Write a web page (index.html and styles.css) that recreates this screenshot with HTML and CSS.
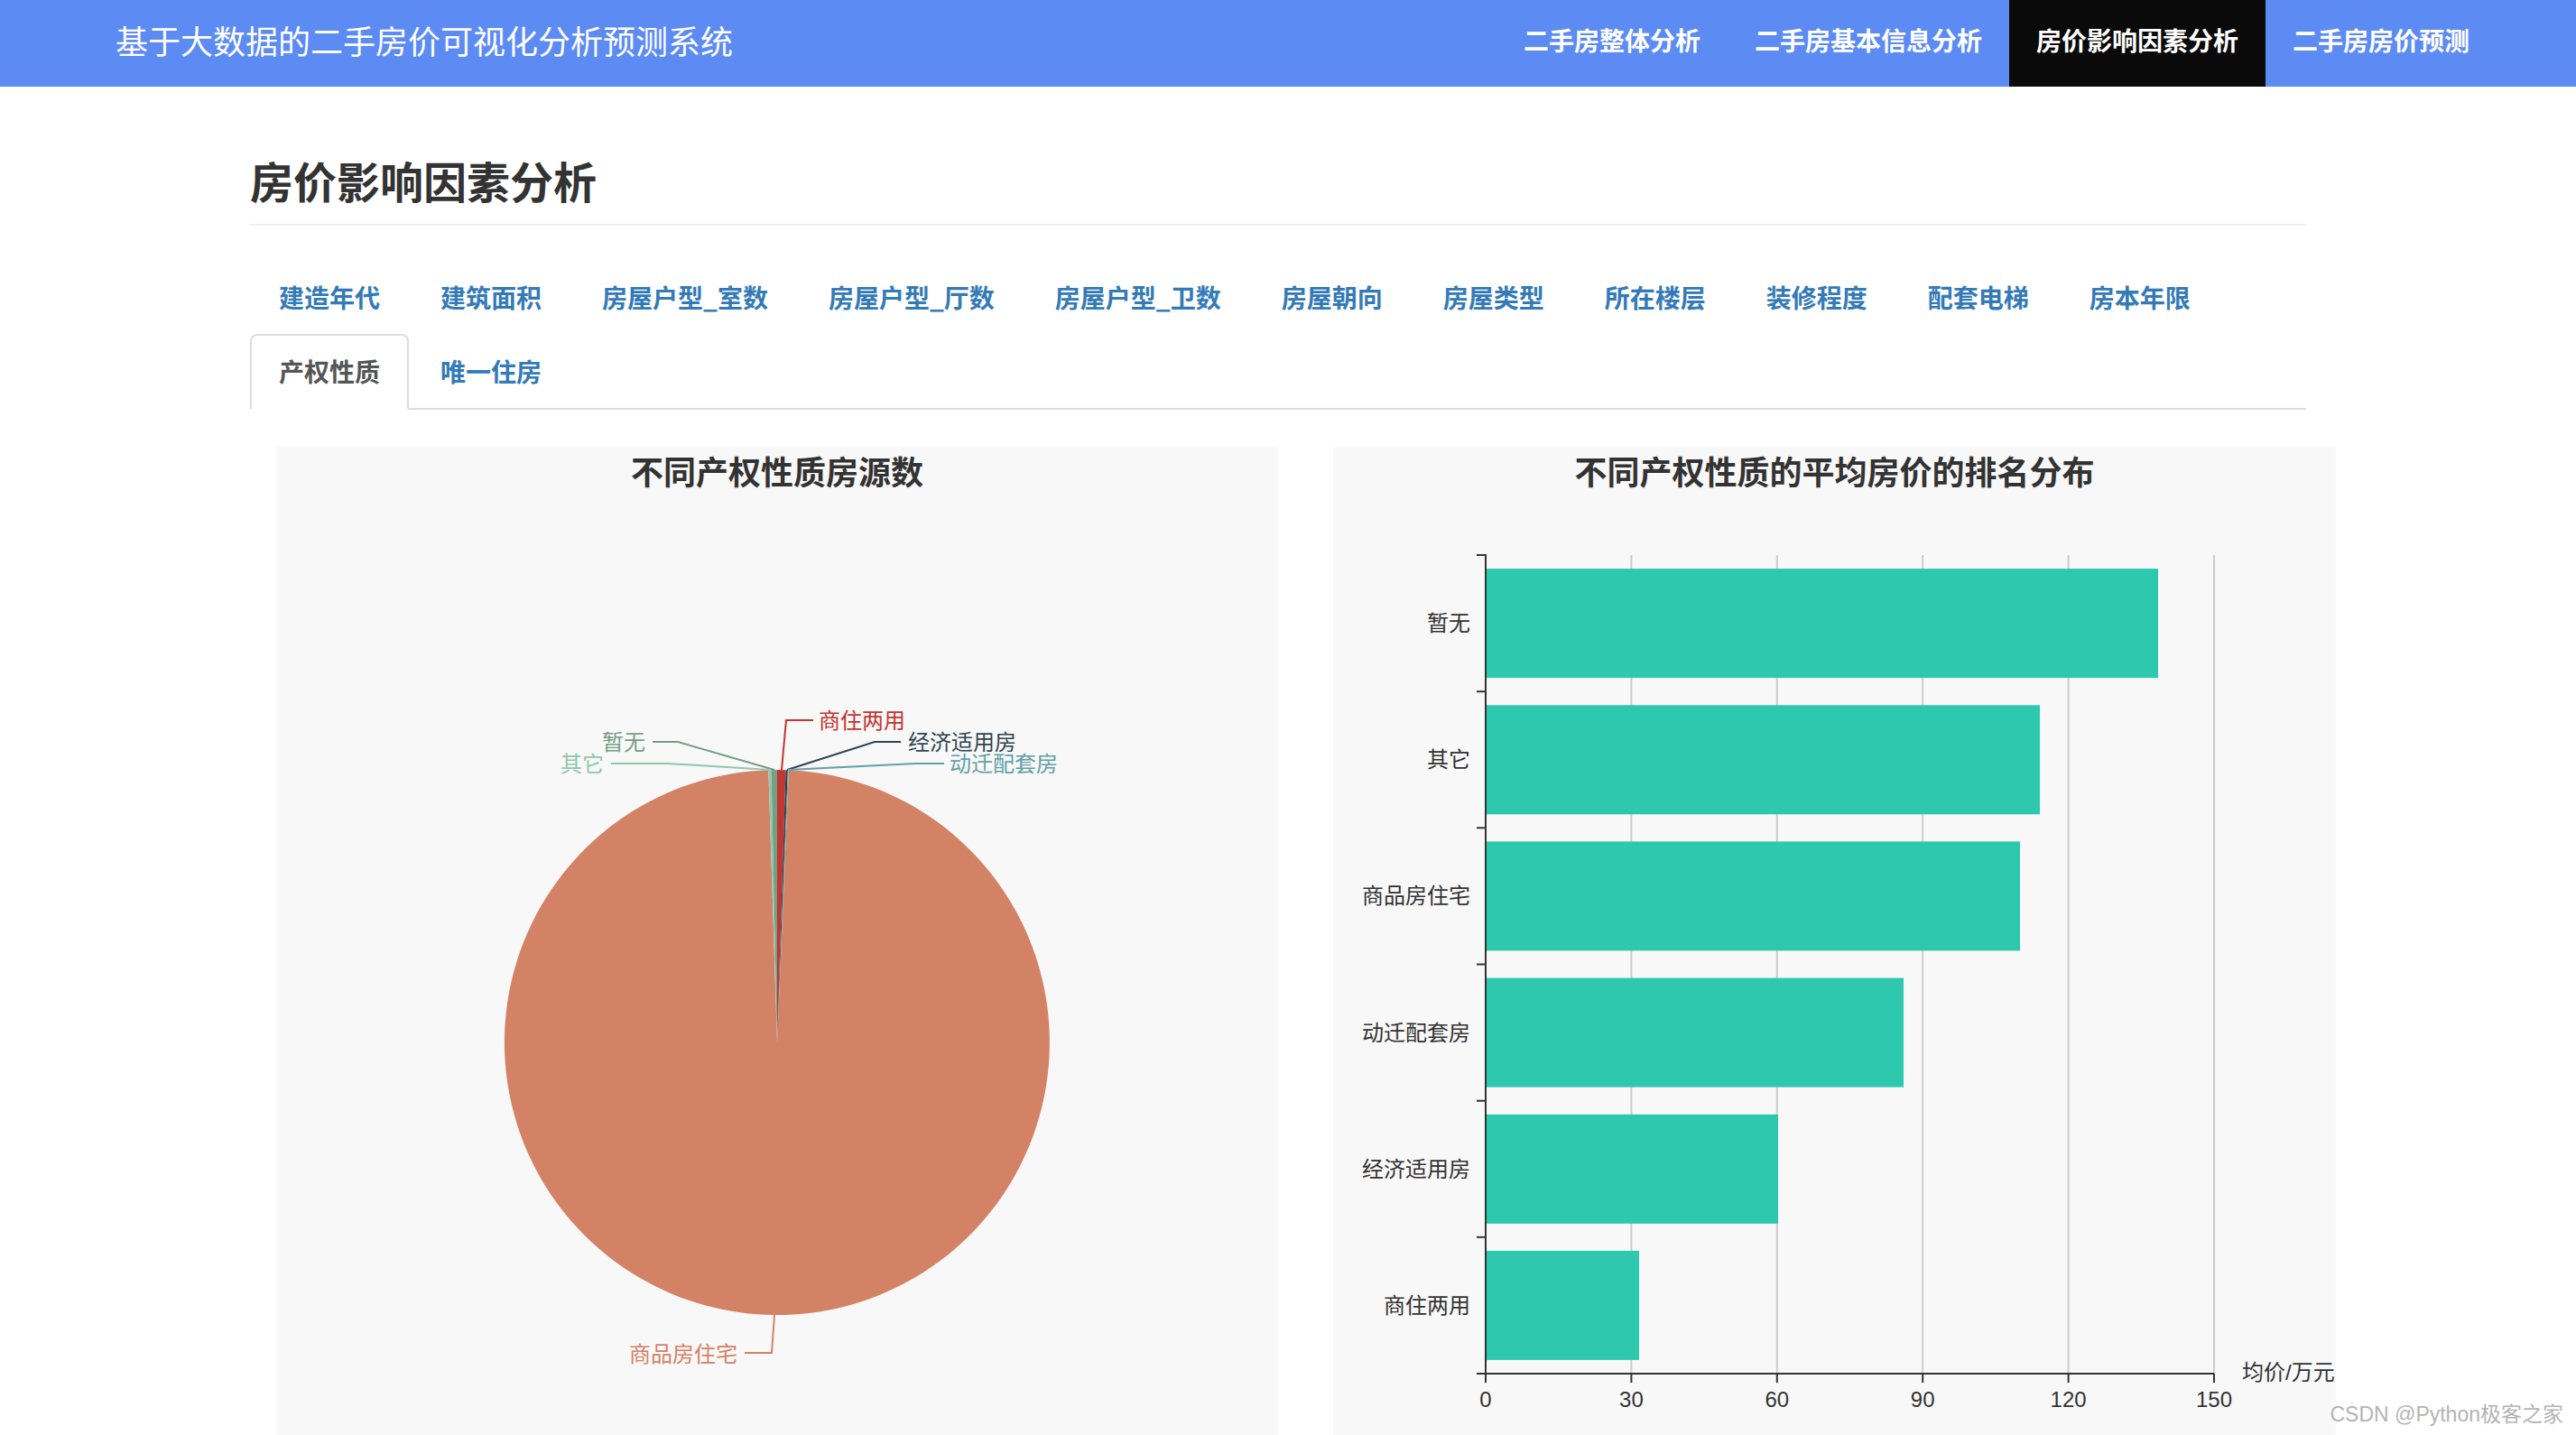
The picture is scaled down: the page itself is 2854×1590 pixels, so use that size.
FILE: index.html
```html
<!DOCTYPE html>
<html lang="zh-CN">
<head>
<meta charset="utf-8">
<title>房价影响因素分析</title>
<link rel="stylesheet" href="styles.css">
</head>
<body>
<header class="navbar">
  <div class="brand">基于大数据的二手房价可视化分析预测系统</div>
  <nav class="nav">
    <a href="#">二手房整体分析</a>
    <a href="#">二手房基本信息分析</a>
    <a href="#" class="active">房价影响因素分析</a>
    <a href="#">二手房房价预测</a>
  </nav>
</header>

<main class="container">
  <div class="page-header"><h3>房价影响因素分析</h3></div>

  <ul class="tabs">
    <li><a href="#">建造年代</a></li>
    <li><a href="#">建筑面积</a></li>
    <li><a href="#">房屋户型_室数</a></li>
    <li><a href="#">房屋户型_厅数</a></li>
    <li><a href="#">房屋户型_卫数</a></li>
    <li><a href="#">房屋朝向</a></li>
    <li><a href="#">房屋类型</a></li>
    <li><a href="#">所在楼层</a></li>
    <li><a href="#">装修程度</a></li>
    <li><a href="#">配套电梯</a></li>
    <li><a href="#">房本年限</a></li>
    <li class="active"><a href="#">产权性质</a></li>
    <li><a href="#">唯一住房</a></li>
  </ul>

  <div class="charts">
    <section class="panel panel-left">
      <svg class="chart" width="1110" height="1095" viewBox="0 0 1110 1095">
        <text class="ctitle" x="555" y="29">不同产权性质房源数</text>
        <g class="slices">
          <path fill="#c23531" d="M555,660 L555,358 A302,302 0 0 1 564.49,358.15 Z"/>
          <path fill="#2f4554" d="M555,660 L564.49,358.15 A302,302 0 0 1 566.86,358.23 Z"/>
          <path fill="#61a0a8" d="M555,660 L566.86,358.23 A302,302 0 0 1 567.91,358.28 Z"/>
          <path fill="#d48265" d="M555,660 L567.91,358.28 A302,302 0 1 1 545.36,358.15 Z"/>
          <path fill="#91c7ae" d="M555,660 L545.36,358.15 A302,302 0 0 1 548.52,358.07 Z"/>
          <path fill="#749f83" d="M555,660 L548.52,358.07 A302,302 0 0 1 555,358 Z"/>
        </g>
        <g class="leaders" fill="none" stroke-width="2">
          <polyline stroke="#c23531" points="560,358 565,303 595,303"/>
          <polyline stroke="#2f4554" points="566,358 663,327 692,327"/>
          <polyline stroke="#61a0a8" points="567,358 709,351 740,351"/>
          <polyline stroke="#749f83" points="552,358 445,327 417,327"/>
          <polyline stroke="#91c7ae" points="547,358 434,351 371,351"/>
          <polyline stroke="#d48265" points="552,962 549,1004 519,1004"/>
        </g>
        <g class="plabels">
          <text x="601" y="303" fill="#c23531">商住两用</text>
          <text x="700" y="327" fill="#2f4554">经济适用房</text>
          <text x="746" y="351" fill="#61a0a8">动迁配套房</text>
          <text x="409" y="327" fill="#749f83" text-anchor="end">暂无</text>
          <text x="363" y="351" fill="#91c7ae" text-anchor="end">其它</text>
          <text x="511" y="1005" fill="#d48265" text-anchor="end">商品房住宅</text>
        </g>
      </svg>
    </section>

    <section class="panel panel-right">
      <svg class="chart" width="1111" height="1095" viewBox="0 0 1111 1095">
        <text class="ctitle" x="555.5" y="29">不同产权性质的平均房价的排名分布</text>
        <g class="grid" stroke="#cccccc" stroke-width="2">
          <line x1="330.4" y1="120" x2="330.4" y2="1027"/>
          <line x1="491.8" y1="120" x2="491.8" y2="1027"/>
          <line x1="653.2" y1="120" x2="653.2" y2="1027"/>
          <line x1="814.6" y1="120" x2="814.6" y2="1027"/>
          <line x1="976" y1="120" x2="976" y2="1027"/>
        </g>
        <g class="bars" fill="#2ec8af">
          <rect x="170" y="135.1" width="744" height="121"/>
          <rect x="170" y="286.3" width="613" height="121"/>
          <rect x="170" y="437.4" width="591" height="121"/>
          <rect x="170" y="588.6" width="462" height="121"/>
          <rect x="170" y="739.8" width="323" height="121"/>
          <rect x="170" y="890.9" width="169" height="121"/>
        </g>
        <g class="axis" stroke="#333333" stroke-width="2">
          <line x1="169" y1="119" x2="169" y2="1028"/>
          <line x1="168" y1="1027" x2="976" y2="1027"/>
          <line x1="159" y1="120" x2="169" y2="120"/>
          <line x1="159" y1="271.2" x2="169" y2="271.2"/>
          <line x1="159" y1="422.3" x2="169" y2="422.3"/>
          <line x1="159" y1="573.5" x2="169" y2="573.5"/>
          <line x1="159" y1="724.7" x2="169" y2="724.7"/>
          <line x1="159" y1="875.8" x2="169" y2="875.8"/>
          <line x1="159" y1="1027" x2="169" y2="1027"/>
          <line x1="169" y1="1027" x2="169" y2="1037"/>
          <line x1="330.4" y1="1027" x2="330.4" y2="1037"/>
          <line x1="491.8" y1="1027" x2="491.8" y2="1037"/>
          <line x1="653.2" y1="1027" x2="653.2" y2="1037"/>
          <line x1="814.6" y1="1027" x2="814.6" y2="1037"/>
          <line x1="976" y1="1027" x2="976" y2="1037"/>
        </g>
        <g class="ylabels">
          <text x="152" y="195.6">暂无</text>
          <text x="152" y="346.8">其它</text>
          <text x="152" y="497.9">商品房住宅</text>
          <text x="152" y="649.1">动迁配套房</text>
          <text x="152" y="800.3">经济适用房</text>
          <text x="152" y="951.4">商住两用</text>
        </g>
        <g class="xlabels">
          <text x="169" y="1055">0</text>
          <text x="330.4" y="1055">30</text>
          <text x="491.8" y="1055">60</text>
          <text x="653.2" y="1055">90</text>
          <text x="814.6" y="1055">120</text>
          <text x="976" y="1055">150</text>
        </g>
        <text class="axisname" x="1007" y="1025">均价/万元</text>
      </svg>
    </section>
  </div>
</main>

<div class="watermark">CSDN @Python极客之家</div>
</body>
</html>
```

FILE: styles.css
```css
html, body {
  margin: 0;
  padding: 0;
  overflow: hidden;
  background: #ffffff;
}

body {
  font-family: "Liberation Sans", "Noto Sans CJK SC", sans-serif;
  color: #333333;
  width: 2854px;
  height: 1590px;
  position: relative;
}

.navbar {
  height: 96px;
  background: #5c8bf3;
  display: flex;
  align-items: center;
  justify-content: space-between;
  padding: 0 88px 0 128px;
}

.brand {
  font-size: 36px;
  color: #ffffff;
  line-height: 40px;
  padding-bottom: 1px;
}

.nav {
  display: flex;
  height: 96px;
}

.nav a {
  display: flex;
  align-items: center;
  padding: 0 30px 9px;
  font-size: 28px;
  font-weight: 600;
  color: #ffffff;
  text-decoration: none;
}

.nav a.active {
  background: #0a0a0a;
}

.container {
  margin-left: 277px;
  width: 2278px;
}

.page-header {
  margin-top: 82px;
  padding-bottom: 17px;
  border-bottom: 2px solid #eeeeee;
}

.page-header h3 {
  margin: 0;
  font-size: 48px;
  line-height: 52.8px;
  font-weight: 600;
  color: #333333;
}

.tabs {
  list-style: none;
  margin: 38px 0 0 0;
  padding: 0;
  display: flex;
  flex-wrap: wrap;
  border-bottom: 2px solid #dddddd;
  font-family: "Noto Sans CJK SC", "Liberation Sans", sans-serif;
}

.tabs li {
  margin-bottom: -2px;
}

.tabs a {
  display: block;
  padding: 19px 30px 21px;
  margin-right: 3px;
  border: 2px solid transparent;
  border-radius: 8px 8px 0 0;
  font-size: 28px;
  line-height: 40px;
  font-weight: 600;
  color: #337ab7;
  text-decoration: none;
}

.tabs li.active a {
  color: #555555;
  background: #ffffff;
  border-color: #dddddd #dddddd transparent;
}

.charts {
  display: flex;
  gap: 61px;
  margin-top: 41px;
  margin-left: 29px;
}

.panel {
  flex-shrink: 0;
  height: 1095px;
  background: #f8f8f8;
}

.panel-left {
  width: 1110px;
}

.panel-right {
  width: 1111px;
}

.chart {
  display: block;
  overflow: hidden;
  font-family: "Liberation Sans", "Noto Sans CJK SC", sans-serif;
}

.ctitle {
  font-size: 36px;
  font-weight: 700;
  fill: #333333;
  text-anchor: middle;
  dominant-baseline: central;
}

.plabels text {
  font-size: 24px;
  dominant-baseline: central;
}

.ylabels text {
  font-size: 24px;
  fill: #333333;
  text-anchor: end;
  dominant-baseline: central;
}

.xlabels text {
  font-size: 24px;
  fill: #333333;
  text-anchor: middle;
  dominant-baseline: central;
}

.axisname {
  font-size: 24px;
  fill: #333333;
  dominant-baseline: central;
}

.watermark {
  position: absolute;
  right: 14px;
  bottom: 8px;
  font-size: 23px;
  color: #b4b4b4;
}
```
